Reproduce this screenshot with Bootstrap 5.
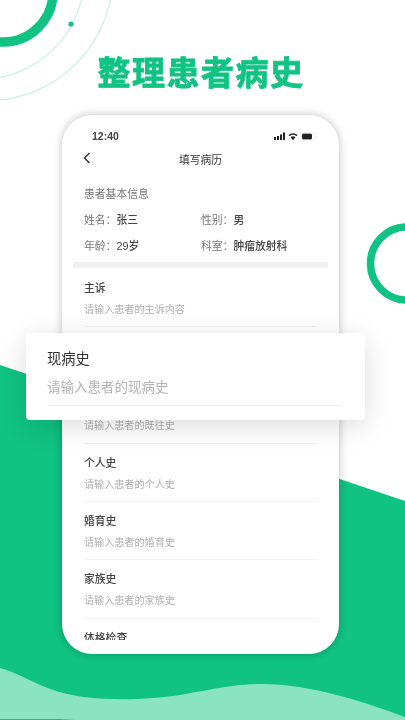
<!DOCTYPE html>
<html lang="zh">
<head>
<meta charset="utf-8">
<meta name="viewport" content="width=device-width, initial-scale=1">
<link href="https://cdn.jsdelivr.net/npm/bootstrap@5.3.0/dist/css/bootstrap.min.css" rel="stylesheet">
<style>
html,body{height:720px;overflow:hidden;background:#fff;}
body{font-family:"Liberation Sans","Noto Sans CJK SC",sans-serif;}
.stage{position:relative;width:405px;height:720px;overflow:hidden;background:#fff;filter:blur(.5px);}
.bg-art{position:absolute;inset:0;width:405px;height:720px;}
.headline{position:relative;margin:0;padding:49px 3px 0 0;height:115px;text-align:center;font-size:33px;line-height:50px;font-weight:700;letter-spacing:1.5px;color:#10c383;-webkit-text-stroke:.8px #10c383;}
.phone{position:relative;width:277px;height:539px;margin-left:62px;background:#fff;border-radius:30px;overflow:hidden;box-shadow:0 0 8px rgba(0,0,0,.26);}
.phone>*{flex-shrink:0;}
.status{height:34px;padding:12px 21px 0 30px;font-size:10.5px;line-height:18px;font-weight:700;color:#444;}
.navline{height:22px;position:relative;font-size:10.8px;line-height:22px;color:#333;text-align:center;}
.navline svg{position:absolute;left:20px;top:2px;}
.basic{padding:13px 22px 0;font-size:10.8px;color:#777;height:91px;}
.basic .cap{line-height:20px;margin-bottom:6px;}
.inforow{height:26px;line-height:20px;}
.inforow>span:first-child{width:117px;}
.inforow b{font-weight:500;color:#444;}
.band{height:6px;margin:0 11px;background:#f1f1f1;}
.fields{padding:.7px 22px 0;height:372px;overflow:hidden;}
.fitem{height:58.33px;border-bottom:1px solid #f3f3f3;padding-top:9px;}
.fname{font-size:10.8px;line-height:20px;font-weight:500;color:#444;}
.fhint{font-size:10.1px;line-height:20px;margin-top:2px;color:#b0b0b0;}
.floatcard{position:absolute;left:26px;top:333px;width:339px;height:87px;background:#fff;border-radius:4px;padding:14px 23px 0 21px;box-shadow:0 6px 28px rgba(0,0,0,.14);}
.floatname{font-size:14.3px;line-height:24px;color:#333;}
.floathint{font-size:13.5px;line-height:24px;margin-top:5px;margin-left:2px;padding-bottom:5px;color:#b4b4b4;border-bottom:1px solid #f0f0f0;text-indent:-2px;}
</style>
</head>
<body>
<div class="stage">
<svg class="bg-art" viewBox="0 0 405 720" aria-hidden="true">
<circle cx="3" cy="-8" r="50" fill="none" stroke="#10c383" stroke-width="9.500"/>
<circle cx="-20" cy="-25" r="104.500" fill="none" stroke="#c5f1e0" stroke-width="1.200"/>
<circle cx="-13" cy="-25" r="125.700" fill="none" stroke="#c5f1e0" stroke-width="1.200"/>
<circle cx="71" cy="24" r="2.600" fill="#10c383"/>
<circle cx="407" cy="263.500" r="36.500" fill="none" stroke="#10c383" stroke-width="7.500"/>
<path d="M0 365L405 501V720H0Z" fill="#10c383"/>
<path d="M0 668C15 672 30 681 50 689C85 702 140 701 180 695C215 689 235 684 262 684C310 684 365 702 405 717V720H75L60 719H0Z" fill="#8ae3c2"/>
</svg>
<h1 class="headline">整理患者病史</h1>
<div class="phone d-flex flex-column">
<div class="status d-flex justify-content-between">
<span>12:40</span>
<svg width="44" height="18" viewBox="0 0 44 18"><g fill="#222"><rect x="0" y="10" width="2" height="3"/><rect x="3" y="9" width="2" height="4"/><rect x="6" y="7.500" width="2" height="5.500"/><rect x="9" y="5.500" width="2" height="7.500"/><path d="M14.500 8a7 7 0 0 1 9 0l-1 1.200a5.500 5.500 0 0 0-7 0zM16.500 10.200a4 4 0 0 1 5 0l-2.500 3z"/><rect x="28" y="6.500" width="10" height="6" rx="1.500"/></g><rect x="27.500" y="6" width="14" height="7" rx="2" fill="none" stroke="#ddd" stroke-width=".6"/></svg>
</div>
<div class="navline">填写病历
<svg width="10" height="14" viewBox="0 0 10 14"><path d="M7.500 2L2.500 7l5 5" fill="none" stroke="#333" stroke-width="1.500"/></svg>
</div>
<div class="basic">
<div class="cap">患者基本信息</div>
<div class="inforow d-flex"><span>姓名：<b>张三</b></span><span>性别：<b>男</b></span></div>
<div class="inforow d-flex"><span>年龄：<b>29岁</b></span><span>科室：<b>肿瘤放射科</b></span></div>
</div>
<div class="band"></div>
<div class="fields">
<div class="fitem"><div class="fname">主诉</div><div class="fhint">请输入患者的主诉内容</div></div>
<div class="fitem"><div class="fname invisible">现病史</div><div class="fhint invisible">请输入患者的现病史</div></div>
<div class="fitem"><div class="fname invisible">既往史</div><div class="fhint">请输入患者的既往史</div></div>
<div class="fitem"><div class="fname">个人史</div><div class="fhint">请输入患者的个人史</div></div>
<div class="fitem"><div class="fname">婚育史</div><div class="fhint">请输入患者的婚育史</div></div>
<div class="fitem"><div class="fname">家族史</div><div class="fhint">请输入患者的家族史</div></div>
<div class="fitem"><div class="fname">体格检查</div></div>
</div>
</div>
<div class="floatcard">
<div class="floatname">现病史</div>
<div class="floathint">请输入患者的现病史</div>
</div>
</div>
<script src="https://cdn.jsdelivr.net/npm/bootstrap@5.3.0/dist/js/bootstrap.bundle.min.js"></script>
</body>
</html>
